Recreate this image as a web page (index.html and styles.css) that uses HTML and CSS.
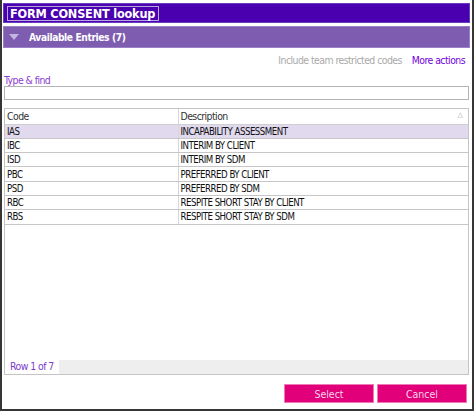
FILE: index.html
```html
<!DOCTYPE html>
<html lang="en">
<head>
    <meta charset="UTF-8">
    <meta name="viewport" content="width=device-width, initial-scale=1.0">
    <title>FORM CONSENT lookup</title>
    <link rel="stylesheet" href="styles.css">
</head>
<body>
    <div class="lookup-dialog">
        <div class="title-bar">
            <span class="title-text">FORM CONSENT lookup</span>
        </div>
        <div class="section-bar">
            <span class="caret"></span>
            <span>Available Entries (7)</span>
        </div>

        <div class="content">
            <div class="actions">
                <span class="restricted">Include team restricted codes</span>
                <a class="more-actions" href="#">More actions</a>
            </div>

            <label class="find-label" for="find">Type &amp; find</label>
            <input type="text" id="find" class="find-input">

            <div class="grid">
                <table class="entries">
                    <thead>
                        <tr>
                            <th class="col-code">Code</th>
                            <th class="col-desc">Description <span class="sort">&#9651;</span></th>
                        </tr>
                    </thead>
                    <tbody id="rows"></tbody>
                </table>
                <div class="grid-fill"></div>
                <div class="grid-footer">
                    <span class="row-count">Row 1 of 7</span>
                    <span class="footer-rest"></span>
                </div>
            </div>
        </div>

        <div class="buttons">
            <button class="btn">Select</button>
            <button class="btn">Cancel</button>
        </div>
    </div>
    <script>
        let entries = [
            { code: "IAS", desc: "INCAPABILITY ASSESSMENT" },
            { code: "IBC", desc: "INTERIM BY CLIENT" },
            { code: "ISD", desc: "INTERIM BY SDM" },
            { code: "PBC", desc: "PREFERRED BY CLIENT" },
            { code: "PSD", desc: "PREFERRED BY SDM" },
            { code: "RBC", desc: "RESPITE SHORT STAY BY CLIENT" },
            { code: "RBS", desc: "RESPITE SHORT STAY BY SDM" }
        ];
        let selected = 0;

        function renderRows() {
            let body = document.getElementById("rows");
            body.innerHTML = "";
            entries.forEach((entry, index) => {
                let tr = document.createElement("tr");
                if (index === selected) tr.classList.add("selected");
                tr.innerHTML = `<td>${entry.code}</td><td>${entry.desc}</td>`;
                tr.addEventListener("click", () => {
                    selected = index;
                    document.querySelector(".row-count").textContent = "Row " + (index + 1) + " of " + entries.length;
                    renderRows();
                });
                body.appendChild(tr);
            });
        }

        renderRows();
    </script>
</body>
</html>
```

FILE: styles.css
```css
* {
    box-sizing: border-box;
}
body {
    margin: 0;
    font-family: 'DejaVu Sans Condensed', 'DejaVu Sans', sans-serif;
    font-size: 10.4px;
    letter-spacing: -0.55px;
    color: #222;
    background: #fff;
}
.lookup-dialog {
    width: 474px;
    height: 411px;
    border: 2px solid #353535;
    border-top: none;
    padding: 3px 2px 0 1px;
    display: flex;
    flex-direction: column;
}
.title-bar {
    height: 20px;
    background: #4a00af;
    border: 1px solid #6a3cc0;
    display: flex;
    align-items: center;
    padding-left: 3px;
}
.title-text {
    color: #fff;
    font-weight: bold;
    font-size: 12.6px;
    letter-spacing: -0.2px;
    border: 1px solid #b9a6e0;
    padding: 1px 3px 0 2px;
    line-height: 12px;
}
.section-bar {
    margin-top: 3px;
    height: 22px;
    background: #7e5cb0;
    border: 1px solid #9a80c8;
    color: #fff;
    font-weight: bold;
    font-size: 10.2px;
    letter-spacing: -0.4px;
    display: flex;
    align-items: center;
    gap: 10px;
    padding-left: 5px;
}
.caret {
    width: 0;
    height: 0;
    border-left: 5px solid transparent;
    border-right: 5px solid transparent;
    border-top: 6px solid #c3b4e2;
}
.content {
    padding: 0 1px 0 1px;
    display: flex;
    flex-direction: column;
}
.actions {
    display: flex;
    justify-content: flex-end;
    gap: 10px;
    margin-top: 5px;
    padding-right: 4px;
    height: 14px;
    align-items: center;
}
.restricted {
    color: #a9a9a9;
}
.more-actions {
    color: #7200dc;
    text-decoration: none;
}
.find-label {
    color: #8a3bd2;
    margin-top: 7px;
    line-height: 12px;
}
.find-input {
    margin: 0;
    width: 100%;
    height: 14px;
    border: 1px solid #b4b4b4;
    border-radius: 0;
    padding: 0 3px;
    font: inherit;
}
.grid {
    margin-top: 8px;
    height: 267px;
    border: 1px solid #c4c4c4;
    display: flex;
    flex-direction: column;
}
.entries {
    width: 100%;
    border-collapse: collapse;
    table-layout: fixed;
}
.entries th {
    text-align: left;
    font-weight: normal;
    color: #333;
    height: 15px;
    padding: 0 2px;
    border-bottom: 1px solid #cfcfcf;
    position: relative;
}
.entries th.col-code {
    width: 173px;
    border-right: 1px solid #d6d6d6;
}
.sort {
    position: absolute;
    right: 6px;
    top: 2px;
    font-size: 7px;
    color: #999;
}
.entries td {
    height: 14.3px;
    padding: 0 2px;
    border-bottom: 1px solid #c6c6c6;
    white-space: nowrap;
    color: #111;
    font-size: 9.6px;
    letter-spacing: -0.5px;
}
.entries td:first-child {
    border-right: 1px solid #d6d6d6;
}
.entries tr.selected td {
    background: #e1d9ee;
}
.grid-fill {
    flex: 1;
}
.grid-footer {
    display: flex;
    height: 14px;
}
.row-count {
    color: #7a3ad0;
    padding: 0 5px 0 5px;
    line-height: 13px;
    background: #fff;
}
.footer-rest {
    flex: 1;
    background: #eeeeee;
}
.buttons {
    display: flex;
    justify-content: flex-end;
    gap: 3px;
    margin-top: 9px;
    padding-right: 3px;
}
.btn {
    width: 90px;
    height: 19px;
    background: #e2007a;
    color: #f6d6e8;
    border: 1px solid #f07ab8;
    border-radius: 0;
    font: inherit;
    font-size: 10.5px;
    cursor: pointer;
}
.btn:hover {
    background: #c4006a;
}
```
